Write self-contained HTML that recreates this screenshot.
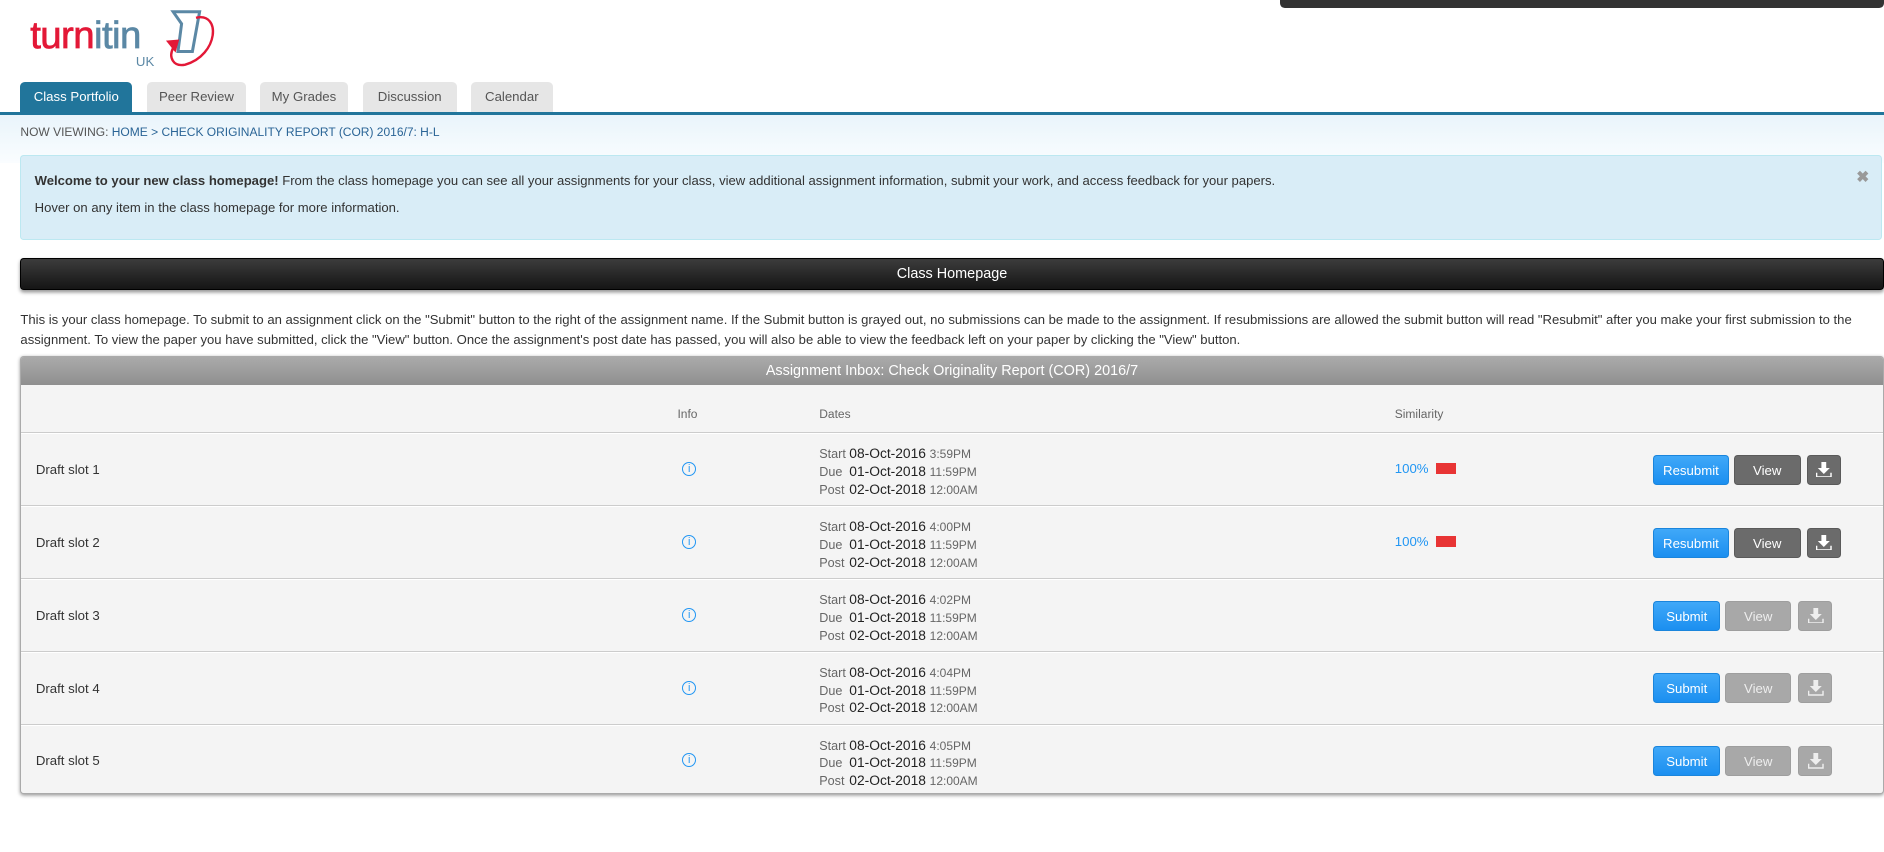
<!DOCTYPE html>
<html><head><meta charset="utf-8">
<style>
html,body{margin:0;padding:0;}
body{width:1568px;height:709px;overflow:hidden;zoom:1.20153;background:#fff;font-family:"Liberation Sans",Arial,sans-serif;color:#333;position:relative;}
.abs{position:absolute;}
.topbar{left:1065px;top:0;width:503px;height:7px;background:#333;border-radius:0 0 4px 4px;}
.logo{left:24px;top:6px;}
.tab{position:absolute;top:68px;height:25px;line-height:25px;font-size:11px;text-align:center;background:#e6e6e6;color:#555;border-radius:4px 4px 0 0;}
.tab.act{background:#21759b;color:#fff;}
.line{left:0;top:93px;width:1568px;height:3px;background:#21759b;}
.grad{left:0;top:96px;width:1568px;height:40px;background:linear-gradient(#e9f4fb,#fafdff);}
.crumb{left:17px;top:104px;font-size:10px;color:#555;}
.crumb span{color:#2a6496;}
.info{left:17px;top:129px;width:1548px;height:69px;background:#d9edf7;border:1px solid #bce8f1;border-radius:3px;font-size:10.9px;color:#333;}
.info p{margin:0;position:absolute;left:11px;}
.close{position:absolute;right:10px;top:10px;color:#999;font-weight:bold;font-size:13px;}
.bar{left:17px;top:215px;width:1549px;height:25px;background:linear-gradient(#3c3c3c,#151515);border:1px solid #000;border-radius:3px;color:#fff;text-align:center;line-height:25px;font-size:12px;box-shadow:0 2px 3px #999;}
.para{left:17px;top:258px;width:1552px;font-size:10.9px;line-height:17px;color:#333;}
.tbl{left:17px;top:296px;width:1549px;height:363px;border:1px solid #aaa;border-radius:3px;background:#f4f4f4;box-shadow:0 1px 3px #999;overflow:hidden;}
.th{height:24px;background:linear-gradient(#aaa,#8f8f8f);color:#fff;text-align:center;line-height:24px;font-size:12px;}
.ch{position:relative;height:39px;border-bottom:1px solid #ccc;font-size:10px;color:#666;}
.row{position:relative;height:59px;border-top:1px solid #fff;border-bottom:1px solid #ccc;font-size:11px;}
.c{position:absolute;}
.dates{left:664px;top:9px;line-height:14px;}
.dates .l{color:#666;font-size:10.5px;display:inline-block;width:25px;}
.dates .d{color:#222;font-size:11.5px;}
.dates .t{color:#666;font-size:10px;}
.ic{width:10px;height:10px;border:1px solid #2196f3;border-radius:50%;color:#2196f3;font-size:9px;line-height:10px;text-align:center;}
.btn{position:absolute;top:17px;height:25px;border-radius:3px;color:#fff;font-size:11px;text-align:center;line-height:25px;}
.btn svg{position:absolute;left:7px;top:5px;}
.blue{background:linear-gradient(#40a8f8,#1b8ff0);border:1px solid #1a85dc;box-sizing:border-box;}
.dk{background:#6b6b6b;border:1px solid #5a5a5a;box-sizing:border-box;}
.lt{background:#a8a8a8;border:1px solid #9e9e9e;box-sizing:border-box;color:#eee;}
.sim{left:1143px;top:22px;color:#2196f3;font-size:11px;}
.sim i{display:inline-block;width:17px;height:9px;background:#e83434;margin-left:6px;vertical-align:-1px;}
</style></head><body>
<div class="abs topbar"></div>
<div class="abs logo">
<svg width="160" height="55" viewBox="0 0 160 55">
<text x="1" y="34" font-family="Liberation Sans,sans-serif" font-size="32" letter-spacing="-0.5" fill="#e31837" stroke="#e31837" stroke-width="0.6">turn<tspan fill="#5b88a5" stroke="#5b88a5">itin</tspan></text>
<text x="89" y="49" font-family="Liberation Sans,sans-serif" font-size="11" fill="#5b88a5">UK</text>
<path d="M120 4 L142 4 L136 37 L124 37 L127 14 Z" fill="none" stroke="#5b88a5" stroke-width="2.5"/>
<path d="M139 9 C160 4 158 40 130 48 C120 50 116 42 120 34" fill="none" stroke="#e31837" stroke-width="2"/>
<path d="M114 28 L125 27 L122 38 Z" fill="#e31837"/>
</svg></div>
<div class="tab act" style="left:17px;width:93px">Class Portfolio</div>
<div class="tab" style="left:122px;width:83px">Peer Review</div>
<div class="tab" style="left:216px;width:74px">My Grades</div>
<div class="tab" style="left:302px;width:78px">Discussion</div>
<div class="tab" style="left:392px;width:68px">Calendar</div>
<div class="abs line"></div>
<div class="abs grad"></div>
<div class="abs crumb">NOW VIEWING: <span>HOME &gt; CHECK ORIGINALITY REPORT (COR) 2016/7: H-L</span></div>
<div class="abs info">
<p style="top:14px"><b>Welcome to your new class homepage!</b> From the class homepage you can see all your assignments for your class, view additional assignment information, submit your work, and access feedback for your papers.</p>
<p style="top:37px">Hover on any item in the class homepage for more information.</p>
<span class="close">✖</span>
</div>
<div class="abs bar">Class Homepage</div>
<div class="abs para">This is your class homepage. To submit to an assignment click on the "Submit" button to the right of the assignment name. If the Submit button is grayed out, no submissions can be made to the assignment. If resubmissions are allowed the submit button will read "Resubmit" after you make your first submission to the assignment. To view the paper you have submitted, click the "View" button. Once the assignment's post date has passed, you will also be able to view the feedback left on your paper by clicking the "View" button.</div>
<div class="abs tbl">
<div class="th">Assignment Inbox: Check Originality Report (COR) 2016/7</div>
<div class="ch"><span class="c" style="left:546px;top:18px">Info</span><span class="c" style="left:664px;top:18px">Dates</span><span class="c" style="left:1143px;top:18px">Similarity</span></div>
<div class="row"><span class="c" style="left:12px;top:23px">Draft slot 1</span><div class="c ic" style="left:550px;top:23px">i</div>
<div class="c dates"><span class="l">Start</span><span class="d">08-Oct-2016</span> <span class="t">3:59PM</span><br><span class="l">Due</span><span class="d">01-Oct-2018</span> <span class="t">11:59PM</span><br><span class="l">Post</span><span class="d">02-Oct-2018</span> <span class="t">12:00AM</span></div>
<div class="c sim">100%<i></i></div>
<div class="btn blue" style="left:1358px;width:63px">Resubmit</div><div class="btn dk" style="left:1425px;width:56px">View</div><div class="btn dk" style="left:1486px;width:28px"><svg width="13" height="13" viewBox="0 0 13 13"><path d="M4.5 0h4v5h3l-5 5-5-5h3z" fill="#fff"/><path d="M0.5 9v3.5h12V9" fill="none" stroke="#fff" stroke-width="1.2"/></svg></div></div>
<div class="row"><span class="c" style="left:12px;top:23px">Draft slot 2</span><div class="c ic" style="left:550px;top:23px">i</div>
<div class="c dates"><span class="l">Start</span><span class="d">08-Oct-2016</span> <span class="t">4:00PM</span><br><span class="l">Due</span><span class="d">01-Oct-2018</span> <span class="t">11:59PM</span><br><span class="l">Post</span><span class="d">02-Oct-2018</span> <span class="t">12:00AM</span></div>
<div class="c sim">100%<i></i></div>
<div class="btn blue" style="left:1358px;width:63px">Resubmit</div><div class="btn dk" style="left:1425px;width:56px">View</div><div class="btn dk" style="left:1486px;width:28px"><svg width="13" height="13" viewBox="0 0 13 13"><path d="M4.5 0h4v5h3l-5 5-5-5h3z" fill="#fff"/><path d="M0.5 9v3.5h12V9" fill="none" stroke="#fff" stroke-width="1.2"/></svg></div></div>
<div class="row"><span class="c" style="left:12px;top:23px">Draft slot 3</span><div class="c ic" style="left:550px;top:23px">i</div>
<div class="c dates"><span class="l">Start</span><span class="d">08-Oct-2016</span> <span class="t">4:02PM</span><br><span class="l">Due</span><span class="d">01-Oct-2018</span> <span class="t">11:59PM</span><br><span class="l">Post</span><span class="d">02-Oct-2018</span> <span class="t">12:00AM</span></div>
<div class="btn blue" style="left:1358px;width:56px">Submit</div><div class="btn lt" style="left:1418px;width:55px">View</div><div class="btn lt" style="left:1479px;width:28px"><svg width="13" height="13" viewBox="0 0 13 13"><path d="M4.5 0h4v5h3l-5 5-5-5h3z" fill="#eee"/><path d="M0.5 9v3.5h12V9" fill="none" stroke="#eee" stroke-width="1.2"/></svg></div></div>
<div class="row"><span class="c" style="left:12px;top:23px">Draft slot 4</span><div class="c ic" style="left:550px;top:23px">i</div>
<div class="c dates"><span class="l">Start</span><span class="d">08-Oct-2016</span> <span class="t">4:04PM</span><br><span class="l">Due</span><span class="d">01-Oct-2018</span> <span class="t">11:59PM</span><br><span class="l">Post</span><span class="d">02-Oct-2018</span> <span class="t">12:00AM</span></div>
<div class="btn blue" style="left:1358px;width:56px">Submit</div><div class="btn lt" style="left:1418px;width:55px">View</div><div class="btn lt" style="left:1479px;width:28px"><svg width="13" height="13" viewBox="0 0 13 13"><path d="M4.5 0h4v5h3l-5 5-5-5h3z" fill="#eee"/><path d="M0.5 9v3.5h12V9" fill="none" stroke="#eee" stroke-width="1.2"/></svg></div></div>
<div class="row" style="border-bottom:none"><span class="c" style="left:12px;top:23px">Draft slot 5</span><div class="c ic" style="left:550px;top:23px">i</div>
<div class="c dates"><span class="l">Start</span><span class="d">08-Oct-2016</span> <span class="t">4:05PM</span><br><span class="l">Due</span><span class="d">01-Oct-2018</span> <span class="t">11:59PM</span><br><span class="l">Post</span><span class="d">02-Oct-2018</span> <span class="t">12:00AM</span></div>
<div class="btn blue" style="left:1358px;width:56px">Submit</div><div class="btn lt" style="left:1418px;width:55px">View</div><div class="btn lt" style="left:1479px;width:28px"><svg width="13" height="13" viewBox="0 0 13 13"><path d="M4.5 0h4v5h3l-5 5-5-5h3z" fill="#eee"/><path d="M0.5 9v3.5h12V9" fill="none" stroke="#eee" stroke-width="1.2"/></svg></div></div>
</div>
</body></html>
